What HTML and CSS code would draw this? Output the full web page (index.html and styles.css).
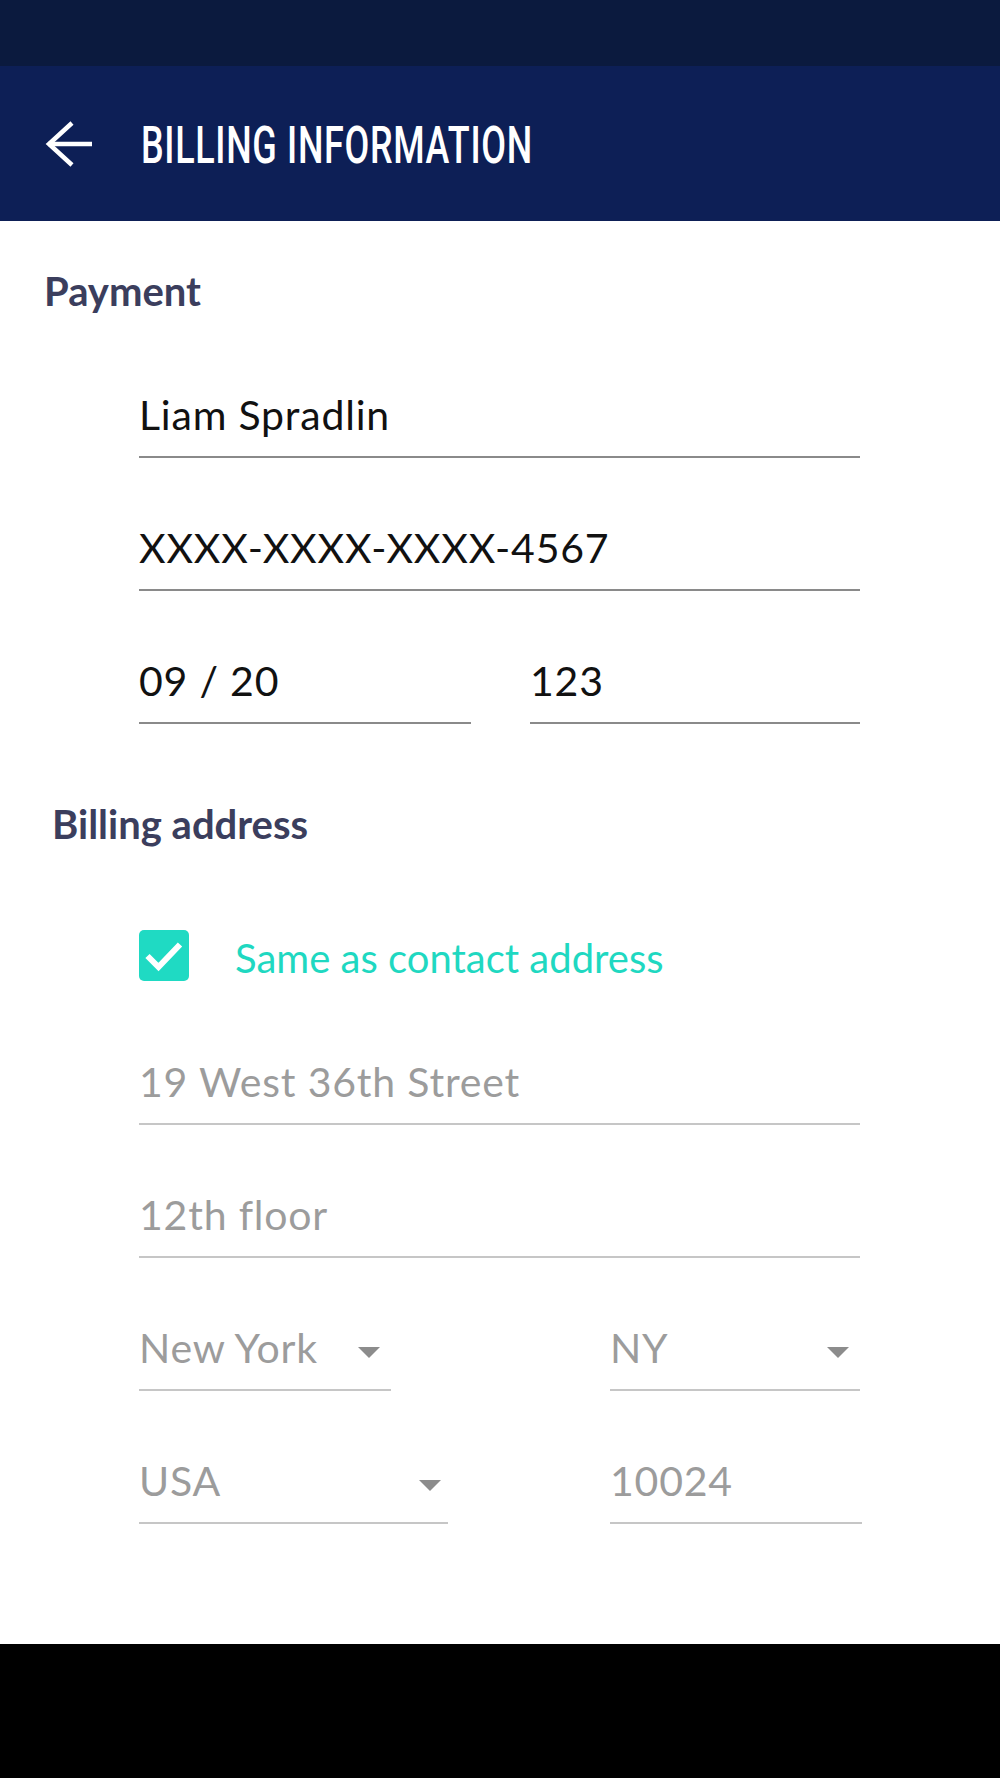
FILE: index.html
```html
<!DOCTYPE html>
<html lang="en">
<head>
<meta charset="utf-8">
<title>Billing information</title>
<link rel="stylesheet" href="styles.css">
</head>
<body>
<div class="screen">
  <div class="statusbar"></div>
  <header class="appbar">
    <svg class="back" width="49" height="48" viewBox="0 0 49 48" aria-label="Back">
      <path d="M3.5 24 H47" fill="none" stroke="#fff" stroke-width="4.5"/>
      <path d="M27 3 L4 24 L27 45" fill="none" stroke="#fff" stroke-width="4.5" stroke-linejoin="miter"/>
    </svg>
    <h1 class="title">BILLING INFORMATION</h1>
  </header>
  <main class="content">
    <h2 class="section section-payment">Payment</h2>
    <div class="fields fields-payment">
      <div class="field dark">Liam Spradlin</div>
      <div class="field dark">XXXX-XXXX-XXXX-4567</div>
      <div class="row">
        <div class="field dark w-exp">09 / 20</div>
        <div class="field dark w-cvc">123</div>
      </div>
    </div>
    <h2 class="section section-billing">Billing address</h2>
    <div class="fields fields-billing">
      <div class="check">
        <span class="box">
          <svg width="50" height="51" viewBox="0 0 50 51"><path d="M8.5 26 L19.5 37 L41 14.5" fill="none" stroke="#fff" stroke-width="6"/></svg>
        </span>
        <span class="check-label">Same as contact address</span>
      </div>
      <div class="field light first-address">19 West 36th Street</div>
      <div class="field light">12th floor</div>
      <div class="row">
        <div class="field light select w-city">New York<span class="caret"></span></div>
        <div class="field light select w-state">NY<span class="caret"></span></div>
      </div>
      <div class="row">
        <div class="field light select w-country">USA<span class="caret"></span></div>
        <div class="field light w-zip">10024</div>
      </div>
    </div>
  </main>
  <div class="navbar"></div>
</div>
</body>
</html>
```
FILE: styles.css
```css
* { box-sizing: border-box; }
html, body { margin: 0; padding: 0; background: #fff; }
body { font-family: "Lato", "Noto Sans", sans-serif; }

.screen { width: 1000px; height: 1778px; display: flex; flex-direction: column; }

.statusbar { height: 66px; background: #0b1a3e; flex: none; }

.appbar {
  height: 155px; flex: none;
  background: #0d1f56;
  display: flex; align-items: center;
  padding-left: 45px;
}
.back { display: block; flex: none; }
.title {
  margin: 0 0 0 47px;
  padding-top: 5px;
  font-family: "Roboto", sans-serif;
  font-weight: 500;
  font-size: 52px;
  line-height: 60px;
  color: #fff;
  letter-spacing: 1px;
  transform: scaleX(0.69);
  transform-origin: left center;
  white-space: nowrap;
}

.content { flex: 1; padding-top: 50px; }

.section {
  margin: 0;
  font-weight: 700;
  font-size: 40px;
  line-height: 40px;
  color: #3b3e5d;
}
.section-payment { padding-left: 44px; }
.section-billing { padding-left: 52px; margin-top: 80px; }

.fields { margin-left: 139px; width: 721px; display: flex; flex-direction: column; gap: 65px; }
.fields-payment { margin-top: 79px; }
.fields-billing { margin-top: 86px; }

.field {
  height: 68px;
  line-height: 50px;
  padding-bottom: 16px;
  font-size: 41px;
  letter-spacing: 0.8px;
  border-bottom: 2px solid #8a8a8a;
  white-space: nowrap;
}
.field.dark { color: #111; }
.field.light { color: #9c9c9c; border-bottom-color: #c6c6c6; }
.first-address { margin-top: 11px; }

.row { display: flex; justify-content: space-between; }
.w-exp { width: 332px; }
.w-cvc { width: 330px; }
.w-city { width: 252px; }
.w-state { width: 250px; }
.w-country { width: 309px; }
.w-zip { width: 252px; margin-right: -2px; }

.select { display: flex; }
.caret {
  margin: 24px 11px 0 auto;
  width: 0; height: 0;
  border-left: 11px solid transparent;
  border-right: 11px solid transparent;
  border-top: 11px solid #8c8c8c;
}
.w-country .caret { margin-right: 7px; }

.check { display: flex; align-items: center; height: 51px; }
.box {
  width: 50px; height: 51px; flex: none;
  background: #1fdac3;
  border-radius: 5px;
  display: block;
}
.box svg { display: block; }
.check-label {
  margin-left: 46px;
  margin-top: 4px;
  font-size: 40px;
  line-height: 50px;
  color: #1fd8c1;
}

.navbar { height: 134px; background: #000; flex: none; }
```
